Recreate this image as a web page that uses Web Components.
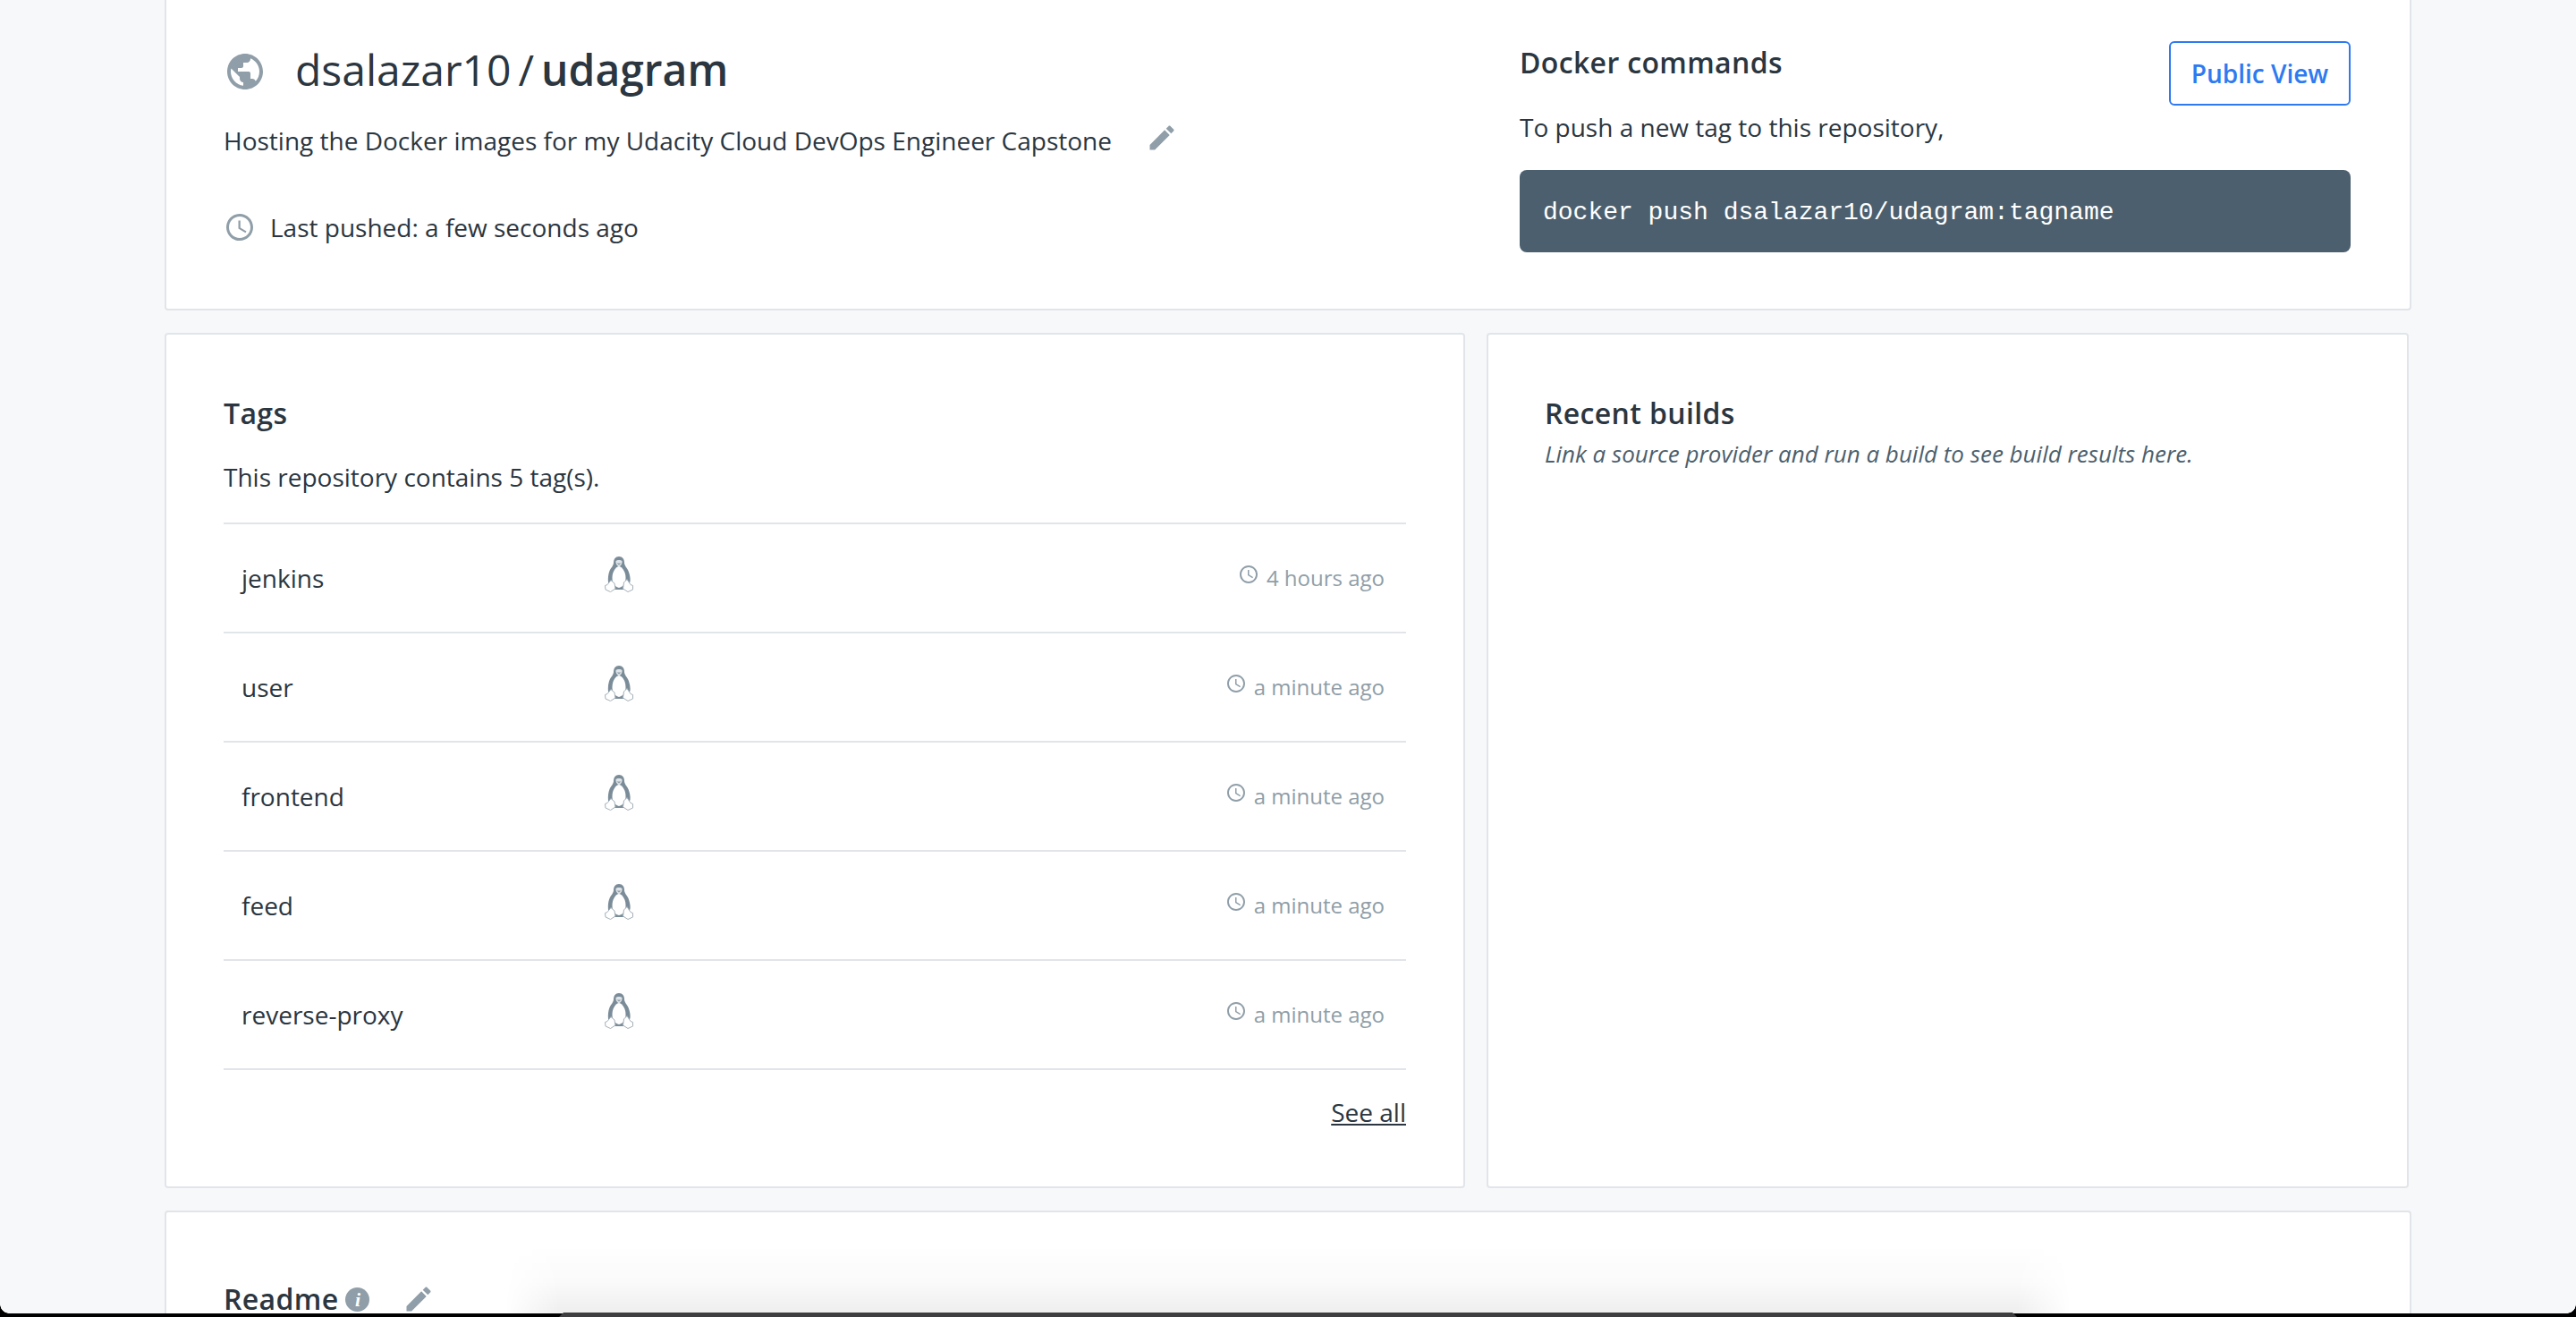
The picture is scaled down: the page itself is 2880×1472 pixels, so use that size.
<!DOCTYPE html>
<html>
<head>
<meta charset="utf-8">
<title>dsalazar10/udagram</title>
<style>
  html, body { margin: 0; height: 100%; overflow: hidden; background: #f7f8fa; }
  body { font-family: "Open Sans", sans-serif; color: #2b3640; }
</style>
</head>
<body>
<repo-page>
  <repo-header></repo-header>
  <repo-columns>
    <tags-card>
      <tag-row name="jenkins" when="4 hours ago"></tag-row>
      <tag-row name="user" when="a minute ago"></tag-row>
      <tag-row name="frontend" when="a minute ago"></tag-row>
      <tag-row name="feed" when="a minute ago"></tag-row>
      <tag-row name="reverse-proxy" when="a minute ago"></tag-row>
    </tags-card>
    <builds-card></builds-card>
  </repo-columns>
  <readme-card></readme-card>
</repo-page>
<window-edge></window-edge>

<script>
const ICONS = {
  globe: '<svg viewBox="0 0 24 24" width="48" height="48" fill="#8f9ea8"><path d="M12 2C6.48 2 2 6.48 2 12s4.48 10 10 10 10-4.48 10-10S17.52 2 12 2zm-1 17.93c-3.95-.49-7-3.85-7-7.93 0-.62.08-1.21.21-1.79L9 15v1c0 1.1.9 2 2 2v1.93zm6.9-2.54c-.26-.81-1-1.39-1.9-1.39h-1v-3c0-.55-.45-1-1-1H8v-2h2c.55 0 1-.45 1-1V7h2c1.1 0 2-.9 2-2v-.41c2.93 1.19 5 4.06 5 7.41 0 2.08-.8 3.97-2.1 5.39z"/></svg>',
  clock: '<svg viewBox="0 0 24 24" width="100%" height="100%" fill="#8f9ea8"><path d="M11.99 2C6.47 2 2 6.48 2 12s4.47 10 9.99 10C17.52 22 22 17.52 22 12S17.52 2 11.99 2zM12 20c-4.42 0-8-3.58-8-8s3.58-8 8-8 8 3.58 8 8-3.58 8-8 8zm.5-13H11v6l5.25 3.15.75-1.23-4.5-2.67z"/></svg>',
  pencil: '<svg viewBox="0 0 24 24" width="36" height="36" fill="#8f9ea8"><path d="M3 17.25V21h3.75L17.81 9.94l-3.75-3.75L3 17.25zM20.71 7.04c.39-.39.39-1.02 0-1.41l-2.34-2.34c-.39-.39-1.02-.39-1.41 0l-1.83 1.83 3.75 3.75 1.83-1.83z"/></svg>',
  tux: '<svg viewBox="0 0 32 40" width="32" height="40"><path d="M16 0C12 0 10 3 10 7 10 10 7.500 12 5.500 16 4 20 3.500 24 4 29L8 37H24L28.500 28C29 24 28 20 26.500 16 24.500 12 22 10 22 7 22 3 20 0 16 0Z" fill="#7b8c99"/><path d="M16 11C11.500 12 8.500 18 8.500 24 8.500 29 10 33.500 16 35 22 33.500 23.500 29 23.500 24 23.500 18 20.500 12 16 11Z" fill="#fff"/><path d="M12.500 5C13.500 3.500 18.500 3.500 19.500 5 20 7.500 18.500 10 16 11.500 13.500 10 12 7.500 12.500 5Z" fill="#dfe4e8"/><path d="M13.500 7.500H18.500L16 9.500Z" fill="#8f9ea8"/><path d="M7 26.500 11 30 12 36 6.500 39.500 1 37 .500 32.500 3 31.500Z" fill="#fff" stroke="#a3b0b9" stroke-width="1"/><path d="M25 25.500 21.500 29 20.500 36 26 39.500 31.500 37 31.500 32.500 29 31.500Z" fill="#fff" stroke="#a3b0b9" stroke-width="1"/></svg>'
};

// every component is the same three lines, so keep them in one helper
function component(tag, html, onConnect) {
  customElements.define(tag, class extends HTMLElement {
    constructor() {
      super();
      this.attachShadow({mode: 'open'}).innerHTML = html;
    }
    connectedCallback() {
      if (onConnect) onConnect.call(this);
    }
  });
}

const CARD = `
  :host { display: block; box-sizing: border-box; background: #fff; border: 2px solid #e1e5e9; border-radius: 4px; }
  h2 { margin: 0; font-size: 32px; line-height: 44px; font-weight: 600; letter-spacing: .35px; color: #2b3640; }
`;

component('repo-page', `
  <style>
    :host { display: flex; flex-direction: column; gap: 25px; height: 1472px; box-sizing: border-box; padding: 0 184px; }
  </style>
  <slot></slot>
`);

component('repo-columns', `
  <style>
    :host { display: flex; gap: 24px; padding-right: 3px; height: 956px; flex: none; }
  </style>
  <slot></slot>
`);

component('repo-header', `
  <style>
    ${CARD}
    :host { border-top: 0; border-radius: 0 0 4px 4px; height: 347px; padding: 46px 66px 0 64px; display: flex; justify-content: space-between; flex: none; }
    .left { width: 1380px; }
    .title { display: flex; align-items: center; height: 64px; font-size: 48px; line-height: 64px; }
    .globe { width: 48px; height: 48px; margin-right: 32px; }
    .title b { font-weight: 600; }
    .slash { margin: 0 8px; }
    .desc { display: flex; align-items: center; margin-top: 27px; font-size: 28px; line-height: 40px; }
    .desc svg { display: block; margin-left: 38px; margin-top: -6px; }
    .pushed { display: flex; align-items: center; margin-top: 57px; font-size: 28px; line-height: 40px; }
    .pushed i { width: 36px; height: 36px; margin-right: 16px; }
    .right { width: 929px; }
    .head { display: flex; justify-content: space-between; height: 72px; }
    .head h2 { margin-top: 2px; }
    .btn { box-sizing: border-box; width: 203px; height: 72px; border: 2px solid #2e7af0; border-radius: 6px; color: #2e7af0; font-size: 28px; font-weight: 600; display: flex; align-items: center; justify-content: center; }
    p { margin: 4px 0 0; font-size: 28px; line-height: 40px; }
    pre { margin: 28px 0 0; height: 92px; box-sizing: border-box; padding: 2px 26px 0; background: #4c5f6e; color: #fff; border-radius: 8px; font: 28px/92px "Liberation Mono", monospace; }
  </style>
  <div class="left">
    <div class="title">
      <span class="globe">${ICONS.globe}</span>
      <span>dsalazar10<span class="slash">/</span><b>udagram</b></span>
    </div>
    <div class="desc">Hosting the Docker images for my Udacity Cloud DevOps Engineer Capstone ${ICONS.pencil}</div>
    <div class="pushed"><i>${ICONS.clock}</i>Last pushed: a few seconds ago</div>
  </div>
  <div class="right">
    <div class="head"><h2>Docker commands</h2><div class="btn">Public View</div></div>
    <p>To push a new tag to this repository,</p>
    <pre>docker push dsalazar10/udagram:tagname</pre>
  </div>
`);

component('tags-card', `
  <style>
    ${CARD}
    :host { width: 1454px; padding: 66px 64px 0 64px; flex: none; }
    p { margin: 29px 0 0; font-size: 28px; line-height: 40px; }
    .rows { margin-top: 31px; border-top: 2px solid #e1e5e9; }
    .all { margin-top: 27px; text-align: right; font-size: 28px; line-height: 40px; text-decoration: underline; }
  </style>
  <h2>Tags</h2>
  <p>This repository contains 5 tag(s).</p>
  <div class="rows"><slot></slot></div>
  <div class="all">See all</div>
`);

component('tag-row', `
  <style>
    :host { display: flex; align-items: center; box-sizing: border-box; height: 122px; padding: 0 24px 0 20px; border-bottom: 2px solid #e1e5e9; font-size: 28px; }
    .name { width: 406px; flex: none; }
    .os { flex: 1; display: flex; margin-top: -8px; }
    .when { display: flex; align-items: center; color: #8f9ea8; font-size: 24px; margin-top: -2px; }
    .when i { width: 24px; height: 24px; margin-right: 8px; margin-top: -10px; }
  </style>
  <span class="name"></span>
  <span class="os">${ICONS.tux}</span>
  <span class="when"><i>${ICONS.clock}</i><span class="ago"></span></span>
`, function () {
  this.shadowRoot.querySelector('.name').textContent = this.getAttribute('name');
  this.shadowRoot.querySelector('.ago').textContent = this.getAttribute('when');
});

component('builds-card', `
  <style>
    ${CARD}
    :host { flex: 1; padding: 66px 64px 0 63px; }
    p { margin: 3px 0 0; font-size: 26px; line-height: 40px; font-style: italic; color: #4c5f6e; }
  </style>
  <h2>Recent builds</h2>
  <p>Link a source provider and run a build to see build results here.</p>
`);

component('readme-card', `
  <style>
    ${CARD}
    :host { flex: 1; min-height: 0; border-bottom: 0; border-radius: 4px 4px 0 0; padding: 75px 64px 0; overflow: hidden; }
    .head { display: flex; align-items: center; height: 44px; }
    .info { width: 27px; height: 27px; margin-left: 8px; border-radius: 50%; background: #8f9ea8; color: #fff; display: flex; align-items: center; justify-content: center; font: italic 700 22px/27px "Liberation Serif", serif; }
    svg { margin-left: 37px; display: block; }
  </style>
  <div class="head"><h2>Readme</h2><span class="info">i</span>${ICONS.pencil}</div>
`);

component('window-edge', `
  <style>
    :host { position: fixed; left: 0; right: 0; bottom: 0; height: 90px; pointer-events: none; display: block; }
    .bar { position: absolute; left: 0; right: 0; bottom: 0; height: 4px; background: #000; }
    .dock { position: absolute; left: 625px; width: 1630px; bottom: 0; height: 5px; background: #3e3e40; clip-path: polygon(5px 0, calc(100% - 5px) 0, 100% 100%, 0 100%); }
    .shade { position: absolute; left: 565px; width: 1750px; bottom: 0; height: 80px; background: linear-gradient(to top, rgba(0,0,0,.07), rgba(0,0,0,.02) 50%, rgba(0,0,0,0)); -webkit-mask-image: linear-gradient(to right, transparent, #000 60px, #000 calc(100% - 60px), transparent); }
    .corner { position: absolute; bottom: 4px; width: 10px; height: 10px; }
    .l { left: 0; background: radial-gradient(circle at 100% 0, transparent 9.500px, #000 10px); }
    .r { right: 0; background: radial-gradient(circle at 0 0, transparent 9.500px, #000 10px); }
  </style>
  <div class="shade"></div>
  <div class="bar"></div>
  <div class="dock"></div>
  <div class="corner l"></div>
  <div class="corner r"></div>
`);
</script>
</body>
</html>
